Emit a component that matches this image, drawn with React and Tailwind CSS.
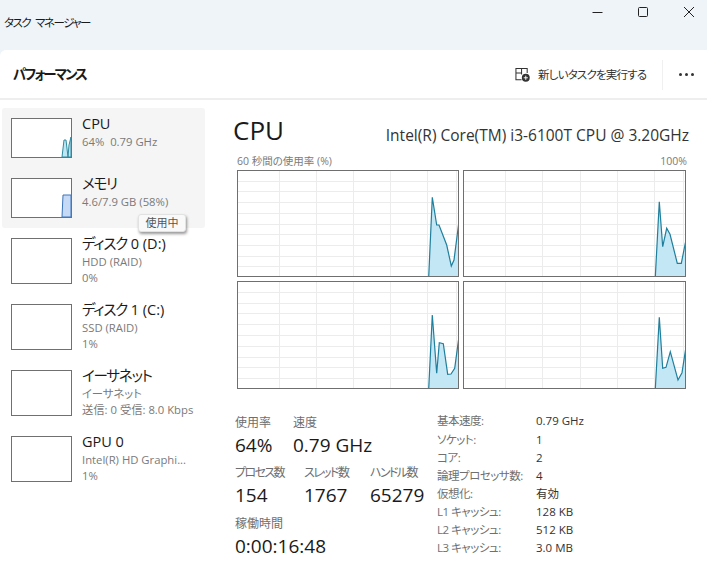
const F = '"Open Sans","Noto Sans CJK JP",sans-serif';

const items = [
  { cjk: '', name: 'CPU', lines: ['64%  0.79 GHz'], h: 'h-[60px]', tc: 'h-[40px]', kind: 'cpu' },
  { cjk: 'メモリ', name: '', lines: ['4.6/7.9 GB (58%)'], h: 'h-[60px]', tc: 'h-[40px]', kind: 'mem' },
  { cjk: 'ディスク', name: ' 0 (D:)', lines: ['HDD (RAID)', '0%'], h: 'h-[66px]', tc: 'h-[46px]' },
  { cjk: 'ディスク', name: ' 1 (C:)', lines: ['SSD (RAID)', '1%'], h: 'h-[66px]', tc: 'h-[46px]' },
  { cjk: 'イーサネット', name: '', lines: ['イーサネット', '送信: 0 受信: 8.0 Kbps'], h: 'h-[66px]', tc: 'h-[46px]' },
  { cjk: '', name: 'GPU 0', lines: ['Intel(R) HD Graphi...', '1%'], h: 'h-[66px]', tc: 'h-[46px]' },
];

function Thumb({ kind, tc }) {
  return (
    <div className={`w-[61px] ${tc} shrink-0 border border-[#707070] bg-white relative overflow-hidden`}>
      {kind === 'cpu' && (
        <svg className="absolute inset-0" width="59" height="38" viewBox="0 0 59 38">
          <path d="M50 38 L52 21 L54 21 L56 38 L57 26 L59 18 L59 38 Z" fill="#bfe6f3" stroke="#2f8ba0" strokeWidth="1" />
        </svg>
      )}
      {kind === 'mem' && (
        <svg className="absolute inset-0" width="59" height="38" viewBox="0 0 59 38">
          <path d="M50 38 L51 16 L59 16 L59 38 Z" fill="#c6daf5" stroke="#3a74b8" strokeWidth="1" />
        </svg>
      )}
    </div>
  );
}

function SideItem({ it }) {
  return (
    <div className={`${it.h} flex items-start pl-[9px] pt-[10px] gap-[10px]`}>
      <Thumb kind={it.kind} tc={it.tc} />
      <div className="flex flex-col -mt-[4px]">
        <div className="text-[14.5px] leading-[20px] text-[#1a1a1a] whitespace-pre">
          <span className="tracking-[-1.2px]">{it.cjk}</span>{it.name}
        </div>
        {it.lines.map((l, i) => (
          <div key={i} className="text-[11.3px] leading-[16px] text-[#7a7a7a] whitespace-pre">{l}</div>
        ))}
      </div>
    </div>
  );
}

const charts = [
  { x0: 237, y0: 170, w: 222, h: 107, pts: [[428.7,277],[432.3,197.3],[436.7,225],[439,225],[446.7,245],[451.3,266],[454,260],[458.5,225]] },
  { x0: 463, y0: 170, w: 223, h: 107, pts: [[655.3,277],[659.3,201.7],[662.7,246.7],[666.7,228.3],[670,234.3],[677.3,263.3],[681.3,263.3],[685.5,242.3]] },
  { x0: 237, y0: 281, w: 222, h: 108, pts: [[428.7,389],[432.3,315],[436.7,373.3],[439.3,342.7],[443.3,343.7],[447.7,374.3],[451,374],[454.7,368.3],[458.5,340]] },
  { x0: 463, y0: 281, w: 223, h: 108, pts: [[655.3,389],[659.3,317.3],[662.7,368.3],[666,367.3],[670.3,351.7],[678,380],[682,372.7],[685.5,350]] },
];

function Chart({ c }) {
  const W = c.w - 2;
  const H = c.h - 2;
  const pts = c.pts.map(([x, y]) => [+(x - c.x0 - 1).toFixed(1), +(y - c.y0 - 1).toFixed(1)]);
  const line = pts.map((p) => p.join(',')).join(' ');
  const fill = `${line} ${W},${H} ${pts[0][0]},${H}`;
  const vs = [1, 2, 3, 4, 5].map((i) => Math.round((i * c.w) / 6 + 4) + 0.5);
  const hs = [1, 2, 3, 4, 5, 6, 7, 8, 9].map((i) => Math.round((i * c.h) / 10) - 0.5);
  return (
    <div className="border border-[#6f6f6f] bg-white h-full">
      <svg width={W} height={H} viewBox={`0 0 ${W} ${H}`} className="block">
        {vs.map((x) => <line key={x} x1={x} x2={x} y1="0" y2={H} stroke="#ececec" />)}
        <line x1={W - 1.5} x2={W - 1.5} y1="0" y2={H} stroke="#ececec" />
        {hs.map((y) => <line key={y} x1="0" x2={W} y1={y} y2={y} stroke="#ececec" />)}
        <polygon points={fill} fill="#c3e7f5" />
        <polyline points={line} fill="none" stroke="#1f7f9c" strokeWidth="1.2" />
      </svg>
    </div>
  );
}

const info = [
  ['基本速度:', '0.79 GHz'],
  ['ソケット:', '1'],
  ['コア:', '2'],
  ['論理プロセッサ数:', '4'],
  ['仮想化:', '有効'],
  ['L1 キャッシュ:', '128 KB'],
  ['L2 キャッシュ:', '512 KB'],
  ['L3 キャッシュ:', '3.0 MB'],
];

function Stat({ label, value, w, kana }) {
  return (
    <div className={w}>
      <div className={`text-[12px] leading-[18px] ${kana ? 'tracking-[-1.6px]' : ''} text-[#6e6e6e] whitespace-nowrap`}>{label}</div>
      <div className="text-[19px] leading-[28px] -mt-[1px] text-[#1a1a1a] whitespace-nowrap">{value}</div>
    </div>
  );
}

export default function App() {
  return (
    <div className="w-[707px] h-[578px] overflow-hidden bg-[#eff4f9] flex flex-col relative [font-feature-settings:'palt']" style={{ fontFamily: F }}>
      <div className="h-[50px] shrink-0 relative">
        <div className="pl-[4px] pt-[14px] text-[11.5px] leading-[18px] tracking-[-1.5px] text-[#1a1a1a] flex gap-[5px] whitespace-nowrap">
          <span>タスク</span>
          <span>マネージャー</span>
        </div>
        <div className="absolute top-0 right-0 h-[24px] flex items-center">
          <svg width="12" height="12" viewBox="0 0 12 12" className="mr-[33px]"><path d="M0.5 6.5H10.5" stroke="#222" strokeWidth="1" /></svg>
          <svg width="12" height="12" viewBox="0 0 12 12" className="mr-[34px]"><rect x="1.5" y="1.5" width="9" height="9" rx="1" fill="none" stroke="#222" /></svg>
          <svg width="12" height="12" viewBox="0 0 12 12" className="mr-[12px]"><path d="M1 1L11 11M11 1L1 11" stroke="#222" strokeWidth="1" /></svg>
        </div>
      </div>

      <div className="flex-1 bg-white rounded-tl-[6px] flex flex-col min-h-0">
        <div className="h-[50px] shrink-0 border-b-2 border-[#eeeeee] flex items-center pl-[13px] pr-[13px] pt-[1px]">
          <div className="text-[13.5px] font-semibold tracking-[-2px] text-[#1a1a1a] flex-1 whitespace-nowrap">パフォーマンス</div>
          <svg width="15" height="15" viewBox="0 0 16 16" className="mr-[8px]">
            <path d="M1 1.5H7V6.5H1ZM7 1.5H13V6.5M1 6.5V13.5H7M7 6.5V8" fill="none" stroke="#333" strokeWidth="1.1" />
            <circle cx="11.5" cy="11.5" r="4.2" fill="#333" />
            <path d="M11.5 9.3V13.7M9.3 11.5H13.7" stroke="#fff" strokeWidth="1" />
          </svg>
          <div className="text-[11.5px] tracking-[-0.8px] text-[#333] whitespace-nowrap w-[110px]">新しいタスクを実行する</div>
          <div className="h-[30px] w-px bg-[#f0f0f0] ml-[14px]" />
          <div className="flex gap-[3px] ml-[16px]">
            <span className="w-[3px] h-[3px] rounded-full bg-[#333]" />
            <span className="w-[3px] h-[3px] rounded-full bg-[#333]" />
            <span className="w-[3px] h-[3px] rounded-full bg-[#333]" />
          </div>
        </div>

        <div className="flex-1 flex min-h-0 pt-[8px]">
          <div className="w-[203px] ml-[2px] shrink-0 relative">
            <div className="bg-[#f5f5f5] rounded-[3px]">
              {items.slice(0, 2).map((it) => <SideItem key={it.lines[0]} it={it} />)}
            </div>
            {items.slice(2).map((it) => <SideItem key={it.lines[0]} it={it} />)}
            <div className="absolute left-[136px] top-[106px] w-[48px] h-[18px] bg-[#f9f9f9] border border-[#e2e2e2] rounded-[3px] shadow-[1px_2px_3px_rgba(0,0,0,0.4)] flex items-center justify-center text-[11px] text-[#555] whitespace-nowrap">使用中</div>
          </div>

          <div className="flex-1 pl-[28px] min-w-0">
            <div className="flex items-end justify-between pr-[18px] h-[39px] pt-[1px]">
              <div className="text-[26px] leading-[34px] text-[#1a1a1a]">CPU</div>
              <div className="text-[15.5px] leading-[22px] text-[#333] whitespace-nowrap mb-[1px]">Intel(R) Core(TM) i3-6100T CPU @ 3.20GHz</div>
            </div>
            <div className="flex justify-between pl-[4px] pr-[20px] text-[10.5px] leading-[14px] text-[#7a7a7a] mt-[7px] mb-[1px]">
              <span>60 秒間の使用率 (%)</span>
              <span>100%</span>
            </div>
            <div className="ml-[4px] w-[449px] grid grid-cols-[222px_223px] grid-rows-[107px_108px] gap-x-[4px] gap-y-[4px] mt-[2px]">
              {charts.map((c, i) => <Chart key={i} c={c} />)}
            </div>
            <div className="flex ml-[2px] mt-[25px]">
              <div className="w-[202px] shrink-0">
                <div className="flex">
                  <Stat label="使用率" value="64%" w="w-[58px]" />
                  <Stat label="速度" value="0.79 GHz" />
                </div>
                <div className="flex mt-[5px]">
                  <Stat label="プロセス数" value="154" w="w-[69px]" kana />
                  <Stat label="スレッド数" value="1767" w="w-[66px]" kana />
                  <Stat label="ハンドル数" value="65279" kana />
                </div>
                <div className="mt-[6px]">
                  <Stat label="稼働時間" value="0:00:16:48" />
                </div>
              </div>
              <div className="flex flex-col -mt-[2px]">
                {info.map(([k, v]) => (
                  <div key={k} className="flex h-[18.1px] items-center text-[11.5px]">
                    <span className="w-[99px] tracking-[-0.5px] text-[#707070] whitespace-nowrap">{k}</span>
                    <span className="text-[#333] whitespace-nowrap">{v}</span>
                  </div>
                ))}
              </div>
            </div>
          </div>
        </div>
      </div>
    </div>
  );
}
